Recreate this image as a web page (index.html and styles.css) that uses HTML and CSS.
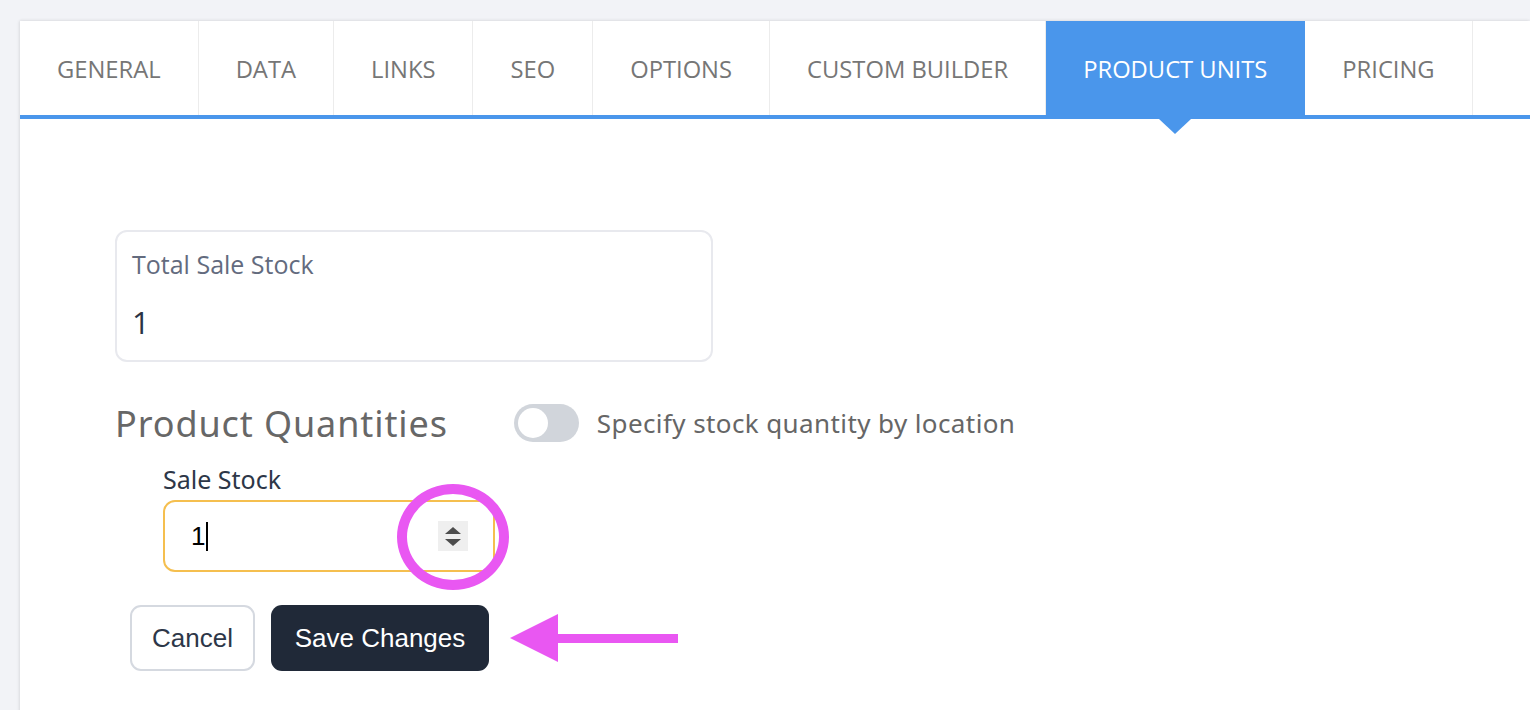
FILE: index.html
```html
<!DOCTYPE html>
<html lang="en">
<head>
    <meta charset="UTF-8">
    <meta name="viewport" content="width=device-width, initial-scale=1.0">
    <title>Product Units</title>
    <link rel="stylesheet" href="styles.css">
</head>
<body>
    <div class="panel">
        <nav class="tabs">
            <div class="tab">GENERAL</div>
            <div class="tab">DATA</div>
            <div class="tab">LINKS</div>
            <div class="tab">SEO</div>
            <div class="tab">OPTIONS</div>
            <div class="tab">CUSTOM BUILDER</div>
            <div class="tab active">PRODUCT UNITS</div>
            <div class="tab">PRICING</div>
            <div class="tab tab-more"></div>
        </nav>

        <div class="panel-body">
            <div class="total-box">
                <div class="total-label">Total Sale Stock</div>
                <div class="total-value">1</div>
            </div>

            <div class="qty-row">
                <h2 class="qty-title">Product Quantities</h2>
                <label class="switch">
                    <span class="switch-track"><span class="switch-knob"></span></span>
                    <span class="switch-text">Specify stock quantity by location</span>
                </label>
            </div>

            <div class="stock-field">
                <div class="field-label">Sale Stock</div>
                <div class="number-input">
                    <span class="number-value">1</span><span class="caret"></span>
                    <span class="spinner">
                        <span class="spin-up"></span>
                        <span class="spin-down"></span>
                    </span>
                    <!-- annotation -->
                    <span class="mark-circle"></span>
                </div>
            </div>

            <div class="actions">
                <button class="btn btn-cancel">Cancel</button>
                <button class="btn btn-save">Save Changes</button>
                <svg class="mark-arrow" width="172" height="52" viewBox="0 0 172 52">
                    <polygon points="0,26 48,2 48,50" fill="#e957f2"/>
                    <rect x="46" y="22" width="122" height="9" fill="#e957f2"/>
                </svg>
            </div>
        </div>
    </div>
</body>
</html>
```

FILE: styles.css
```css
:root {
    --page-bg: #f2f3f7;
    --tab-text: #767676;
    --tab-line: #ececec;
    --accent: #4a96eb;
    --slate: #2d3748;
    --mark: #e957f2;
}

* {
    margin: 0;
    padding: 0;
    box-sizing: border-box;
}

body {
    background: var(--page-bg);
    padding: 21px 0 0 20px;
    overflow: hidden;
    height: 100vh;
}

.panel {
    background: #ffffff;
    min-height: 720px;
    box-shadow: -1px 0 3px rgba(0,0,0,0.08), 0 -1px 3px rgba(0,0,0,0.05);
}

/* tabs */
.tabs {
    display: flex;
    border-bottom: 4px solid var(--accent);
    height: 98px;
}

.tab {
    height: 94px;
    display: flex;
    align-items: center;
    padding: 1px 37px 0 37px;
    border-right: 1px solid var(--tab-line);
    font-family: 'Open Sans', sans-serif;
    font-size: 23.75px;
    color: var(--tab-text);
    white-space: nowrap;
    position: relative;
}

.tab.active {
    background: var(--accent);
    color: #ffffff;
    border-right-color: var(--accent);
}

.tab.active::after {
    content: '';
    position: absolute;
    left: 50%;
    bottom: -19px;
    margin-left: -16px;
    border-left: 16px solid transparent;
    border-right: 16px solid transparent;
    border-top: 15px solid var(--accent);
}

.tab-more {
    flex: 1;
    border-right: none;
}

/* body */
.panel-body {
    padding: 111px 0 40px 95px;
}

.total-box {
    width: 598px;
    height: 132px;
    border: 2px solid #e8e9ee;
    border-radius: 12px;
    padding: 15px 15px 0;
    font-family: 'Open Sans', sans-serif;
}

.total-label {
    font-size: 25px;
    color: #636b7e;
    line-height: 34px;
}

.total-value {
    font-size: 31px;
    color: #2a3345;
    line-height: 40px;
    margin-top: 21px;
}

.qty-row {
    display: flex;
    align-items: center;
    margin-top: 42px;
    height: 38px;
}

.qty-title {
    font-family: 'Noto Sans', sans-serif;
    font-weight: 400;
    font-size: 36px;
    letter-spacing: 0.9px;
    color: #676767;
    margin-right: 66px;
}

.switch {
    display: flex;
    align-items: center;
    gap: 18px;
}

.switch-track {
    width: 65px;
    height: 38px;
    border-radius: 19px;
    background: #d1d5db;
    display: flex;
    align-items: center;
    padding-left: 4px;
}

.switch-knob {
    width: 30px;
    height: 30px;
    border-radius: 50%;
    background: #ffffff;
}

.switch-text {
    font-family: 'Noto Sans', sans-serif;
    font-size: 26px;
    letter-spacing: 0.4px;
    color: #666666;
}

.stock-field {
    margin: 20px 0 0 48px;
}

.field-label {
    font-family: 'Noto Sans', sans-serif;
    font-size: 25px;
    color: var(--slate);
    line-height: 34px;
}

.number-input {
    position: relative;
    margin-top: 4px;
    width: 332px;
    height: 72px;
    border: 2px solid #f5bf4f;
    border-radius: 12px;
    display: flex;
    align-items: center;
    padding-left: 26px;
    font-family: 'Liberation Sans', Arial, sans-serif;
    font-size: 26px;
    color: #000000;
}

.caret {
    width: 2px;
    height: 29px;
    background: #000000;
    margin-left: 1px;
}

.spinner {
    margin-left: auto;
    margin-right: 25px;
    width: 30px;
    height: 30px;
    background: #efefef;
    display: flex;
    flex-direction: column;
    align-items: center;
    justify-content: center;
    gap: 5px;
}

.spin-up {
    border-left: 8px solid transparent;
    border-right: 8px solid transparent;
    border-bottom: 7px solid #4d4d4d;
}

.spin-down {
    border-left: 8px solid transparent;
    border-right: 8px solid transparent;
    border-top: 7px solid #4d4d4d;
}

.mark-circle {
    position: absolute;
    left: 232px;
    top: -18px;
    width: 112px;
    height: 106px;
    border: 10px solid var(--mark);
    border-radius: 50%;
}

.actions {
    position: relative;
    display: flex;
    gap: 16px;
    margin: 33px 0 0 15px;
}

.btn {
    height: 66px;
    border-radius: 11px;
    font-family: 'Liberation Sans', Arial, sans-serif;
    font-size: 26px;
    padding: 0 20px;
    cursor: pointer;
}

.btn-cancel {
    width: 125px;
    background: #ffffff;
    border: 2px solid #d5d9e0;
    color: var(--slate);
}

.btn-save {
    width: 218px;
    background: #202938;
    border: none;
    color: #ffffff;
}

.mark-arrow {
    position: absolute;
    left: 380px;
    top: 7px;
}
```
